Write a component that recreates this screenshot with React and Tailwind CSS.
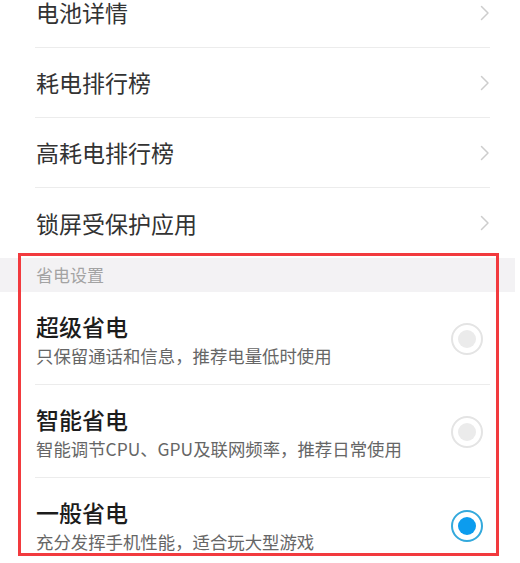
import React from 'react';

const links = ['电池详情', '耗电排行榜', '高耗电排行榜', '锁屏受保护应用'];

const modes = [
  { title: '超级省电', desc: '只保留通话和信息，推荐电量低时使用', checked: false },
  { title: '智能省电', desc: '智能调节CPU、GPU及联网频率，推荐日常使用', checked: false },
  { title: '一般省电', desc: '充分发挥手机性能，适合玩大型游戏', checked: true },
];

function Chevron() {
  return (
    <svg width="10" height="16" viewBox="0 0 10 16" fill="none">
      <path d="M1.5 1.5 L8 8 L1.5 14.5" stroke="#cdcdcd" strokeWidth="1.5" strokeLinecap="round" strokeLinejoin="round" />
    </svg>
  );
}

function Radio({ checked }) {
  return (
    <div
      className={
        checked
          ? 'w-[32px] h-[32px] rounded-full border-2 border-[#34a9dc] flex items-center justify-center'
          : 'w-[32px] h-[32px] rounded-full border-2 border-[#e4e4e4] flex items-center justify-center'
      }
    >
      <div className={checked ? 'w-[18px] h-[18px] rounded-full bg-[#0c9cee]' : 'w-[18px] h-[18px] rounded-full bg-[#ebebeb]'} />
    </div>
  );
}

export default function App() {
  return (
    <div
      className="relative w-[520px] h-[563px] overflow-hidden bg-white"
      style={{ fontFamily: '"Noto Sans CJK SC", "Noto Sans", sans-serif' }}
    >
      <div className="-mt-[22px]">
        {links.map((label, i) => (
          <div
            key={label}
            className={
              i < links.length - 1
                ? 'ml-[35px] mr-[30px] h-[70px] flex items-center justify-between border-b border-[#ececec]'
                : 'ml-[35px] mr-[30px] h-[70px] flex items-center justify-between'
            }
          >
            <span className="text-[23px] text-[#333333] pl-[1px]">{label}</span>
            <Chevron />
          </div>
        ))}
      </div>

      <div className="w-[515px] h-[34px] bg-[#f3f2f4] flex items-center pl-[36px]">
        <span className="text-[17px] text-[#a3a3a3]">省电设置</span>
      </div>

      <div>
        {modes.map((m, i) => (
          <div
            key={m.title}
            className={
              i < modes.length - 1
                ? 'ml-[35px] mr-[30px] h-[93px] flex justify-between border-b border-[#ececec]'
                : 'ml-[35px] mr-[30px] h-[93px] flex justify-between'
            }
          >
            <div className="pl-[1px] pt-[20px]">
              <div className="text-[23px] leading-[28px] font-medium text-[#1c1c1c]">{m.title}</div>
              <div className="text-[17.4px] leading-[24px] mt-[4px] text-[#666666]">{m.desc}</div>
            </div>
            <div className="self-center mr-[7px] mt-[2px]">
              <Radio checked={m.checked} />
            </div>
          </div>
        ))}
      </div>

      <div className="absolute left-[18px] top-[253px] w-[481px] h-[303px] border-[3px] border-[#f23a3e] pointer-events-none" />
    </div>
  );
}
